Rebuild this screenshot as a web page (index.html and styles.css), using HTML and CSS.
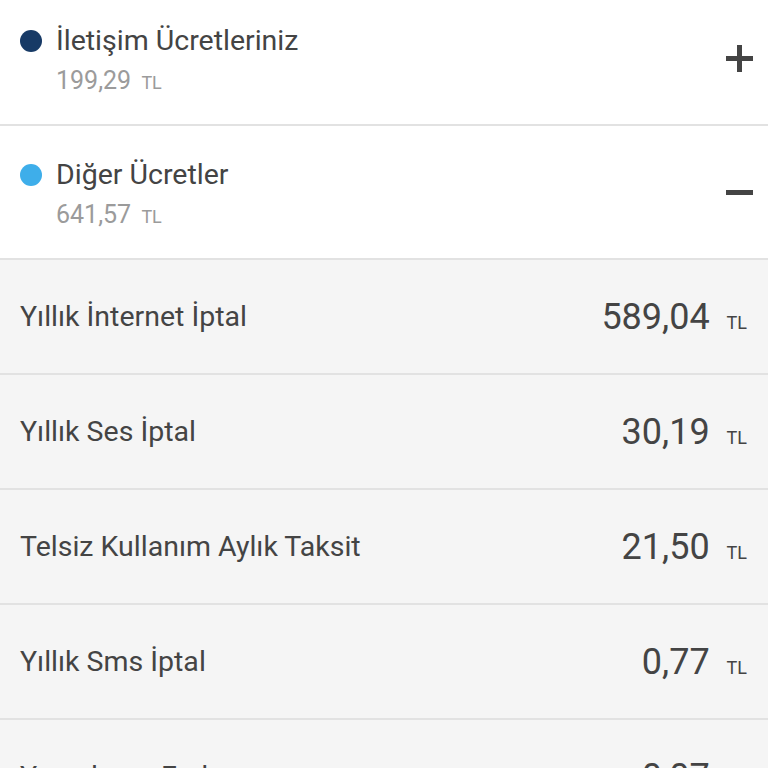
FILE: index.html
```html
<!DOCTYPE html>
<html lang="tr">

<head>
    <meta charset="UTF-8">
    <meta name="viewport" content="width=device-width, initial-scale=1.0">
    <title>Fatura Detayı</title>
    <link rel="stylesheet" href="styles.css">
</head>

<body>
    <div class="bill">
        <div class="group group-first">
            <span class="dot dot-dark"></span>
            <div class="group-text">
                <div class="group-title">İletişim Ücretleriniz</div>
                <div class="group-amount">199,29 <span class="cur">TL</span></div>
            </div>
            <svg class="toggle" width="27" height="27" viewBox="0 0 27 27">
                <rect x="0" y="11" width="27" height="5" fill="#444"/>
                <rect x="11" y="0" width="5" height="27" fill="#444"/>
            </svg>
        </div>

        <div class="group">
            <span class="dot dot-light"></span>
            <div class="group-text">
                <div class="group-title">Diğer Ücretler</div>
                <div class="group-amount">641,57 <span class="cur">TL</span></div>
            </div>
            <svg class="toggle" width="27" height="27" viewBox="0 0 27 27">
                <rect x="0" y="11" width="27" height="5" fill="#444"/>
            </svg>
        </div>

        <div class="row">
            <span class="row-label">Yıllık İnternet İptal</span>
            <span class="row-amount">589,04 <span class="cur">TL</span></span>
        </div>
        <div class="row">
            <span class="row-label">Yıllık Ses İptal</span>
            <span class="row-amount">30,19 <span class="cur">TL</span></span>
        </div>
        <div class="row">
            <span class="row-label">Telsiz Kullanım Aylık Taksit</span>
            <span class="row-amount">21,50 <span class="cur">TL</span></span>
        </div>
        <div class="row">
            <span class="row-label">Yıllık Sms İptal</span>
            <span class="row-amount">0,77 <span class="cur">TL</span></span>
        </div>
        <div class="row">
            <span class="row-label">Yuvarlama Farkı</span>
            <span class="row-amount">0,07 <span class="cur">TL</span></span>
        </div>
    </div>
</body>

</html>
```

FILE: styles.css
```css
body {
    margin: 0;
    font-family: Roboto, "Liberation Sans", sans-serif;
    color: #444;
    background: #f5f5f5;
}

.group {
    display: flex;
    align-items: flex-start;
    box-sizing: border-box;
    height: 134px;
    padding: 32px 15px 0 20px;
    background: #fff;
    border-bottom: 2px solid #e2e2e2;
}

/* the list is scrolled a bit, the first header is cut at the top */
.group-first {
    height: 126px;
    padding-top: 24px;
}

.dot {
    flex: none;
    width: 22px;
    height: 22px;
    margin-top: 6px;
    border-radius: 50%;
}

.dot-dark {
    background: #173a66;
}

.dot-light {
    background: #3eaeea;
}

.group-text {
    flex: 1;
    margin-left: 14px;
}

.group-title {
    font-size: 28.5px;
    line-height: 34px;
}

.group-amount {
    margin-top: 8px;
    font-size: 25px;
    line-height: 30px;
    color: #9b9b9b;
}

.group-amount .cur {
    margin-left: 4px;
    font-size: 18px;
}

.toggle {
    flex: none;
    margin-top: 21px;
}

.row {
    display: flex;
    align-items: center;
    justify-content: space-between;
    box-sizing: border-box;
    height: 115px;
    padding: 0 21px 0 20px;
    background: #f5f5f5;
    border-bottom: 2px solid #e2e2e2;
}

.row-label {
    font-size: 28.5px;
}

.row-amount {
    font-size: 36px;
}

.row-amount .cur {
    margin-left: 8px;
    font-size: 18px;
}
```
